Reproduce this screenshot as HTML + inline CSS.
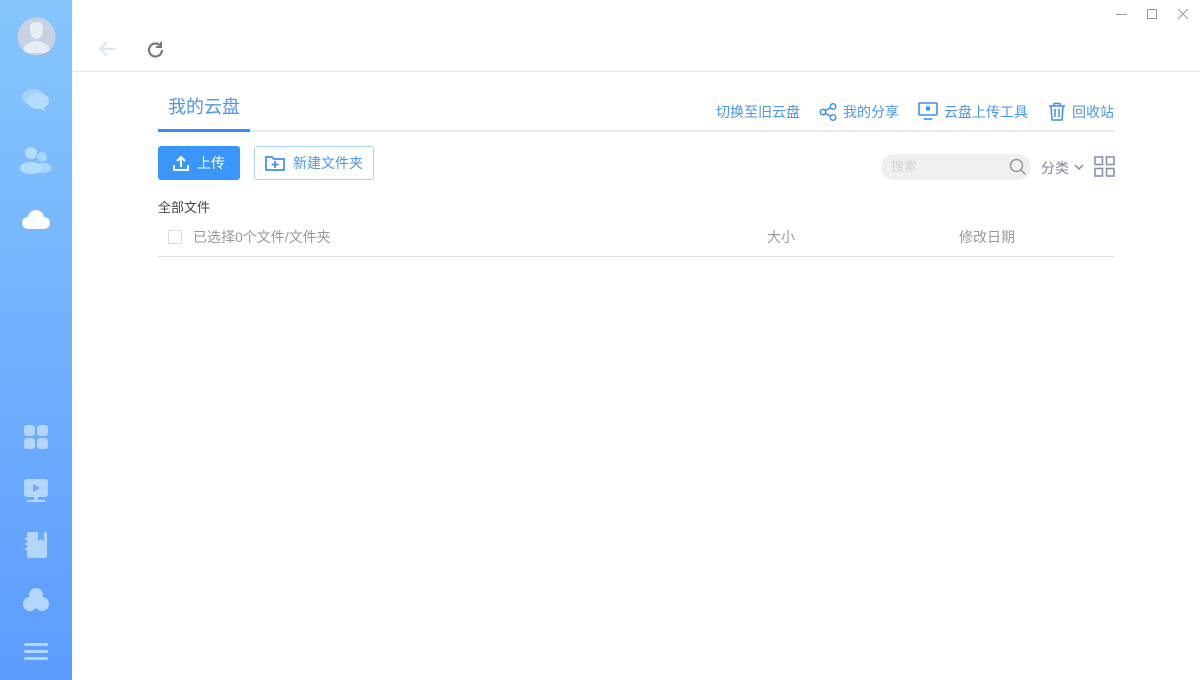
<!DOCTYPE html>
<html><head><meta charset="utf-8"><style>
*{margin:0;padding:0;box-sizing:border-box}
body{width:1200px;height:680px;overflow:hidden;background:#fff;font-family:"Liberation Sans","Noto Sans CJK SC",sans-serif;position:relative}
.side{position:absolute;left:0;top:0;width:72px;height:680px;background:linear-gradient(#86c6fd,#5c9cfe)}
.side svg{position:absolute}
.abs{position:absolute}
.blue{color:#4a95f5}
</style></head><body>
<div class="side">
<svg style="left:17px;top:17px" width="39" height="39" viewBox="0 0 39 39"><circle cx="19.5" cy="19.5" r="19" fill="#c8d0e2"/><clipPath id="c"><circle cx="19.5" cy="19.5" r="19"/></clipPath><g clip-path="url(#c)" fill="#e8ecf4"><path d="M13 10 Q13 5 19.5 5 Q26 5 26 10 L25.5 16 Q24 22 19.5 22 Q15 22 13.5 16Z"/><path d="M5 36 Q7 25 19.5 24 Q32 25 34 36 Z"/></g></svg>
<svg style="left:21px;top:88px" width="30" height="26" viewBox="0 0 30 26" fill="#b4dcfd"><ellipse cx="12" cy="9" rx="11" ry="8" opacity=".7"/><ellipse cx="17" cy="13" rx="11" ry="8"/><path d="M22 19 L25 25 L19 20Z"/></svg>
<svg style="left:19px;top:146px" width="34" height="30" viewBox="0 0 34 30" fill="#b4dcfd"><circle cx="12" cy="7" r="6"/><circle cx="23" cy="11" r="5" opacity=".8"/><ellipse cx="12" cy="22" rx="11" ry="6"/><ellipse cx="24" cy="22" rx="9" ry="5" opacity=".8"/></svg>
<svg style="left:20px;top:208px" width="32" height="24" viewBox="0 0 32 24" fill="#fff"><circle cx="16" cy="10" r="8"/><circle cx="8" cy="15" r="6"/><circle cx="24" cy="15" r="6"/><rect x="8" y="13" width="16" height="8"/></svg>
<svg style="left:24px;top:425px" width="24" height="24" viewBox="0 0 24 24" fill="#b4d6fd"><rect x="0" y="0" width="11" height="11" rx="3"/><rect x="13" y="0" width="11" height="11" rx="3"/><rect x="0" y="13" width="11" height="11" rx="3"/><rect x="13" y="13" width="11" height="11" rx="3"/></svg>
<svg style="left:24px;top:479px" width="24" height="24" viewBox="0 0 24 24" fill="#b4d6fd"><rect x="0" y="0" width="24" height="18" rx="3"/><path d="M9 5 L16 9 L9 13Z" fill="#6aa8fe"/><rect x="10" y="18" width="4" height="3"/><rect x="3" y="21" width="18" height="2"/></svg>
<svg style="left:25px;top:532px" width="22" height="26" viewBox="0 0 22 26" fill="#b4d6fd"><rect x="2" y="0" width="20" height="26" rx="2"/><path d="M13 0h6v9l-3-2-3 2z" fill="#6aa8fe"/><rect x="0" y="6" width="5" height="2"/><rect x="0" y="11" width="5" height="2"/><rect x="0" y="16" width="5" height="2"/></svg>
<svg style="left:23px;top:587px" width="26" height="26" viewBox="0 0 26 26" fill="#b4d6fd"><circle cx="13" cy="8" r="7"/><circle cx="7" cy="17" r="7"/><circle cx="19" cy="17" r="7"/></svg>
<svg style="left:24px;top:643px" width="24" height="18" viewBox="0 0 24 18" fill="#b4d6fd"><rect y="0" width="24" height="3" rx="1.5"/><rect y="7" width="24" height="3" rx="1.5"/><rect y="14" width="24" height="3" rx="1.5"/></svg>
</div>
<svg class="abs" style="left:1110px;top:6px" width="80" height="16" viewBox="0 0 80 16" stroke="#999" fill="none" stroke-width="1"><path d="M6 8.5h11"/><rect x="37.5" y="3.5" width="9" height="9"/><path d="M68 3l10 10M78 3l-10 10"/></svg>
<svg class="abs" style="left:98px;top:40px" width="20" height="18" viewBox="0 0 20 18" stroke="#dde6ee" stroke-width="2" fill="none"><path d="M18 9H3M9 2L2 9l7 7"/></svg>
<svg class="abs" style="left:146px;top:40px" width="20" height="20" viewBox="0 0 20 20" stroke="#777" stroke-width="2.2" fill="none"><path d="M16 10a6.5 6.5 0 1 1-2-4.7"/><path d="M15 2v5h-5" stroke-width="2"/></svg>
<div class="abs" style="left:72px;top:71px;width:1128px;height:1px;background:#e8e8e8"></div>
<div class="abs" style="left:168px;top:93px;font-size:18px;color:#4f94f0">我的云盘</div>
<div class="abs" style="left:158px;top:130px;width:956px;height:2px;background:#e9e9e9"></div>
<div class="abs" style="left:158px;top:129px;width:92px;height:3px;background:#3a8ef5"></div>
<div class="abs blue" style="left:716px;top:102px;font-size:14px">切换至旧云盘</div>
<svg class="abs" style="left:819px;top:103px" width="18" height="18" viewBox="0 0 18 18" stroke="#3d8ef5" fill="none" stroke-width="1.5"><circle cx="4" cy="9" r="2.7"/><circle cx="14" cy="3.5" r="2.7"/><circle cx="14" cy="14.5" r="2.7"/><path d="M6.3 7.6l5.4-2.8M6.3 10.4l5.4 2.8"/></svg>
<div class="abs blue" style="left:843px;top:102px;font-size:14px">我的分享</div>
<svg class="abs" style="left:918px;top:102px" width="20" height="18" viewBox="0 0 20 18" fill="none" stroke="#3d8ef5" stroke-width="1.6"><rect x="1" y="1" width="18" height="12" rx="1"/><path d="M6 17h8"/><rect x="8" y="4.5" width="4" height="4" fill="#3d8ef5" stroke="none"/></svg>
<div class="abs blue" style="left:944px;top:102px;font-size:14px">云盘上传工具</div>
<svg class="abs" style="left:1048px;top:102px" width="18" height="19" viewBox="0 0 18 19" fill="none" stroke="#3d8ef5" stroke-width="1.5"><path d="M1 4h16M6 4V1.5h6V4M3 4l1 14h10l1-14M7 7v8M11 7v8"/></svg>
<div class="abs blue" style="left:1072px;top:102px;font-size:14px">回收站</div>
<div class="abs" style="left:158px;top:146px;width:82px;height:34px;background:#3a96fb;border-radius:3px;color:#fff;font-size:14px;line-height:34px;padding-left:39px">上传</div>
<svg class="abs" style="left:173px;top:155px" width="16" height="16" viewBox="0 0 16 16" fill="none" stroke="#fff" stroke-width="2"><path d="M8 12V2M4 6l4-4 4 4M1 10v5h14v-5"/></svg>
<div class="abs" style="left:254px;top:146px;width:120px;height:34px;border:1px solid #a9d3fb;border-radius:3px;color:#4a95f5;font-size:14px;line-height:32px;padding-left:38px">新建文件夹</div>
<svg class="abs" style="left:265px;top:155px" width="20" height="16" viewBox="0 0 20 16" fill="none" stroke="#3d8ef5" stroke-width="1.7"><path d="M1 2h6l2 2h10v11H1z"/><path d="M10 6v7M6.5 9.5h7"/></svg>
<div class="abs" style="left:881px;top:154px;width:150px;height:26px;background:#f0f0f0;border-radius:13px;font-size:13px;color:#d3d3d3;line-height:26px;padding-left:10px">搜索</div>
<svg class="abs" style="left:1009px;top:158px" width="18" height="18" viewBox="0 0 18 18" fill="none" stroke="#999" stroke-width="1.5"><circle cx="7.5" cy="7.5" r="6"/><path d="M12 12l4.5 4.5"/></svg>
<div class="abs" style="left:1041px;top:158px;font-size:14px;color:#808a99">分类</div>
<svg class="abs" style="left:1073px;top:163px" width="12" height="8" viewBox="0 0 12 8" fill="none" stroke="#808a99" stroke-width="1.4"><path d="M2 2l4 4 4-4"/></svg>
<svg class="abs" style="left:1094px;top:156px" width="21" height="21" viewBox="0 0 21 21" fill="none" stroke="#8a94a8" stroke-width="1.6"><rect x="1" y="1" width="7.5" height="7.5"/><rect x="12.5" y="1" width="7.5" height="7.5"/><rect x="1" y="12.5" width="7.5" height="7.5"/><rect x="12.5" y="12.5" width="7.5" height="7.5"/></svg>
<div class="abs" style="left:158px;top:197px;font-size:13px;color:#444">全部文件</div>
<div class="abs" style="left:168px;top:230px;width:14px;height:14px;border:1px solid #d5dbe3;border-radius:2px"></div>
<div class="abs" style="left:193px;top:227px;font-size:14px;color:#999">已选择0个文件/文件夹</div>
<div class="abs" style="left:767px;top:227px;font-size:14px;color:#999">大小</div>
<div class="abs" style="left:959px;top:227px;font-size:14px;color:#999">修改日期</div>
<div class="abs" style="left:158px;top:256px;width:956px;height:1px;background:#e2e2e2"></div>
</body></html>
